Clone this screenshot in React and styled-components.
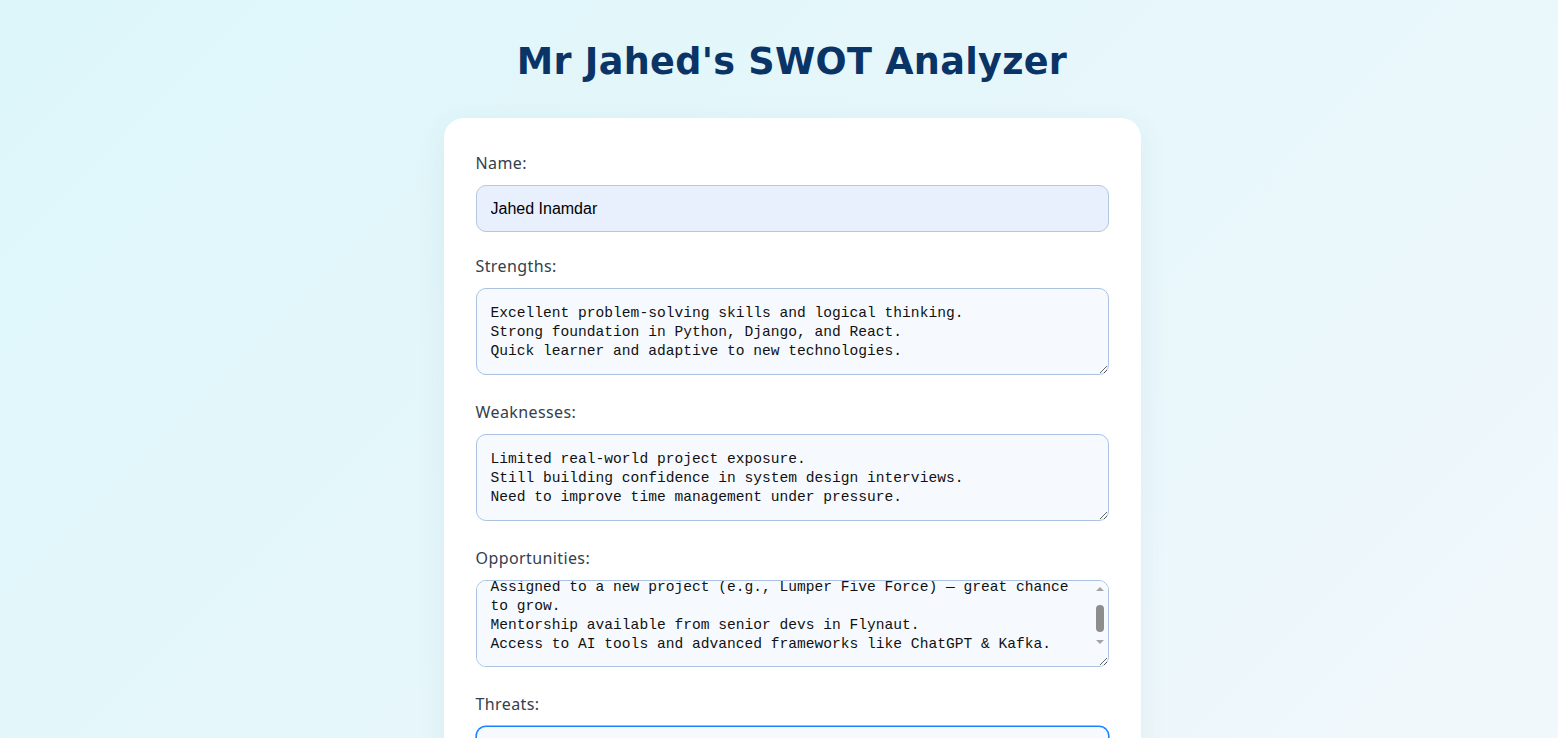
import React, { useEffect, useRef } from 'react';
import styled, { createGlobalStyle } from 'styled-components';

const GlobalStyle = createGlobalStyle`
  html, body {
    margin: 0;
    padding: 0;
    overflow: hidden;
  }
  body {
    font-family: 'Noto Sans', 'Liberation Sans', sans-serif;
    background: linear-gradient(135deg, #ddf6fa 0%, #e8f7fb 55%, #f3f8fc 100%);
    min-height: 100vh;
  }
`;

const Page = styled.div`
  display: flex;
  flex-direction: column;
  align-items: center;
  padding: 0 0 40px 26px;
  min-height: 100vh;
  box-sizing: border-box;
`;

const Title = styled.h1`
  margin: 39px 0 33px;
  font-family: 'DejaVu Sans', 'Liberation Sans', sans-serif;
  font-size: 36.6px;
  line-height: 46px;
  font-weight: 700;
  color: #0a3466;
  letter-spacing: 0.3px;
`;

const Card = styled.form`
  width: 697px;
  box-sizing: border-box;
  background: #ffffff;
  border-radius: 20px;
  padding: 35px 32px 40px;
  box-shadow: 0 8px 30px rgba(40, 90, 120, 0.07);
`;

const Field = styled.div`
  margin-bottom: ${(p) => p.$gap}px;
`;

const Label = styled.label`
  display: block;
  font-size: 16px;
  line-height: 20px;
  letter-spacing: 0.4px;
  color: #33404d;
  margin-bottom: 12px;
`;

const TextInput = styled.input`
  display: block;
  width: 100%;
  height: 47px;
  box-sizing: border-box;
  padding: 0 14px;
  border: 1px solid #b3c7e2;
  border-radius: 10px;
  background: #e8f0fe;
  font-family: 'Liberation Sans', Arial, sans-serif;
  font-size: 16px;
  color: #000;
  outline: none;
`;

const AreaWrap = styled.div`
  position: relative;
`;

const TextArea = styled.textarea`
  display: block;
  width: 100%;
  height: 87px;
  box-sizing: border-box;
  padding: 15px 14px 13px;
  border: 1px solid ${(p) => (p.$active ? '#1a82ff' : '#abc2e2')};
  box-shadow: ${(p) => (p.$active ? '0 0 0 0.6px #1a82ff' : 'none')};
  border-radius: 10px;
  background: #f6faff;
  font-family: 'Liberation Mono', 'DejaVu Sans Mono', monospace;
  font-size: 14.6px;
  line-height: 19px;
  color: #111;
  outline: none;
  resize: vertical;
  overflow-y: ${(p) => (p.$scrolls ? 'scroll' : 'auto')};
`;

/* drawn scrollbar laid over the textarea (headless hides the native one) */
const Rail = styled.div`
  position: absolute;
  top: 1px;
  right: 1px;
  width: 15px;
  height: 68px;
  display: flex;
  flex-direction: column;
  align-items: center;
  pointer-events: none;
`;

const ArrowButton = styled.div`
  height: 15px;
  display: flex;
  align-items: center;
  justify-content: center;

  &::before {
    content: '';
    border-left: 4px solid transparent;
    border-right: 4px solid transparent;
    ${(p) => (p.$down ? 'border-top' : 'border-bottom')}: 4px solid #a3a3a3;
  }
`;

const Track = styled.div`
  flex: 1;
  width: 100%;
  display: flex;
  justify-content: center;
`;

const Thumb = styled.div`
  width: 8px;
  height: 27px;
  margin-top: 9px;
  border-radius: 4px;
  background: #8d8d8d;
`;

const fields = [
  {
    key: 'strengths',
    label: 'Strengths:',
    value:
      'Excellent problem-solving skills and logical thinking.\nStrong foundation in Python, Django, and React.\nQuick learner and adaptive to new technologies.',
  },
  {
    key: 'weaknesses',
    label: 'Weaknesses:',
    value:
      'Limited real-world project exposure.\nStill building confidence in system design interviews.\nNeed to improve time management under pressure.',
  },
  {
    key: 'opportunities',
    label: 'Opportunities:',
    value:
      'Assigned to a new project (e.g., Lumper Five Force) — great chance to grow.\nMentorship available from senior devs in Flynaut.\nAccess to AI tools and advanced frameworks like ChatGPT & Kafka.',
    scroll: 18,
  },
  {
    key: 'threats',
    label: 'Threats:',
    value:
      'Fast-changing tech landscape.\nCompetition from experienced developers.\nRisk of burnout from tight deadlines.',
    active: true,
  },
];

const SwotArea = ({ label, value, scroll, active }) => {
  const ref = useRef(null);

  useEffect(() => {
    if (ref.current && scroll) ref.current.scrollTop = scroll;
  }, [scroll]);

  return (
    <Field $gap={27}>
      <Label>{label}</Label>
      <AreaWrap>
        <TextArea ref={ref} defaultValue={value} $active={active} $scrolls={!!scroll} />
        {scroll ? (
          <Rail>
            <ArrowButton />
            <Track>
              <Thumb />
            </Track>
            <ArrowButton $down />
          </Rail>
        ) : null}
      </AreaWrap>
    </Field>
  );
};

const App = () => {
  return (
    <>
      <GlobalStyle />
      <Page>
        <Title>Mr Jahed's SWOT Analyzer</Title>
        <Card onSubmit={(e) => e.preventDefault()}>
          <Field $gap={24}>
            <Label>Name:</Label>
            <TextInput type="text" defaultValue="Jahed Inamdar" />
          </Field>
          {fields.map((f) => (
            <SwotArea key={f.key} {...f} />
          ))}
        </Card>
      </Page>
    </>
  );
};

export default App;
